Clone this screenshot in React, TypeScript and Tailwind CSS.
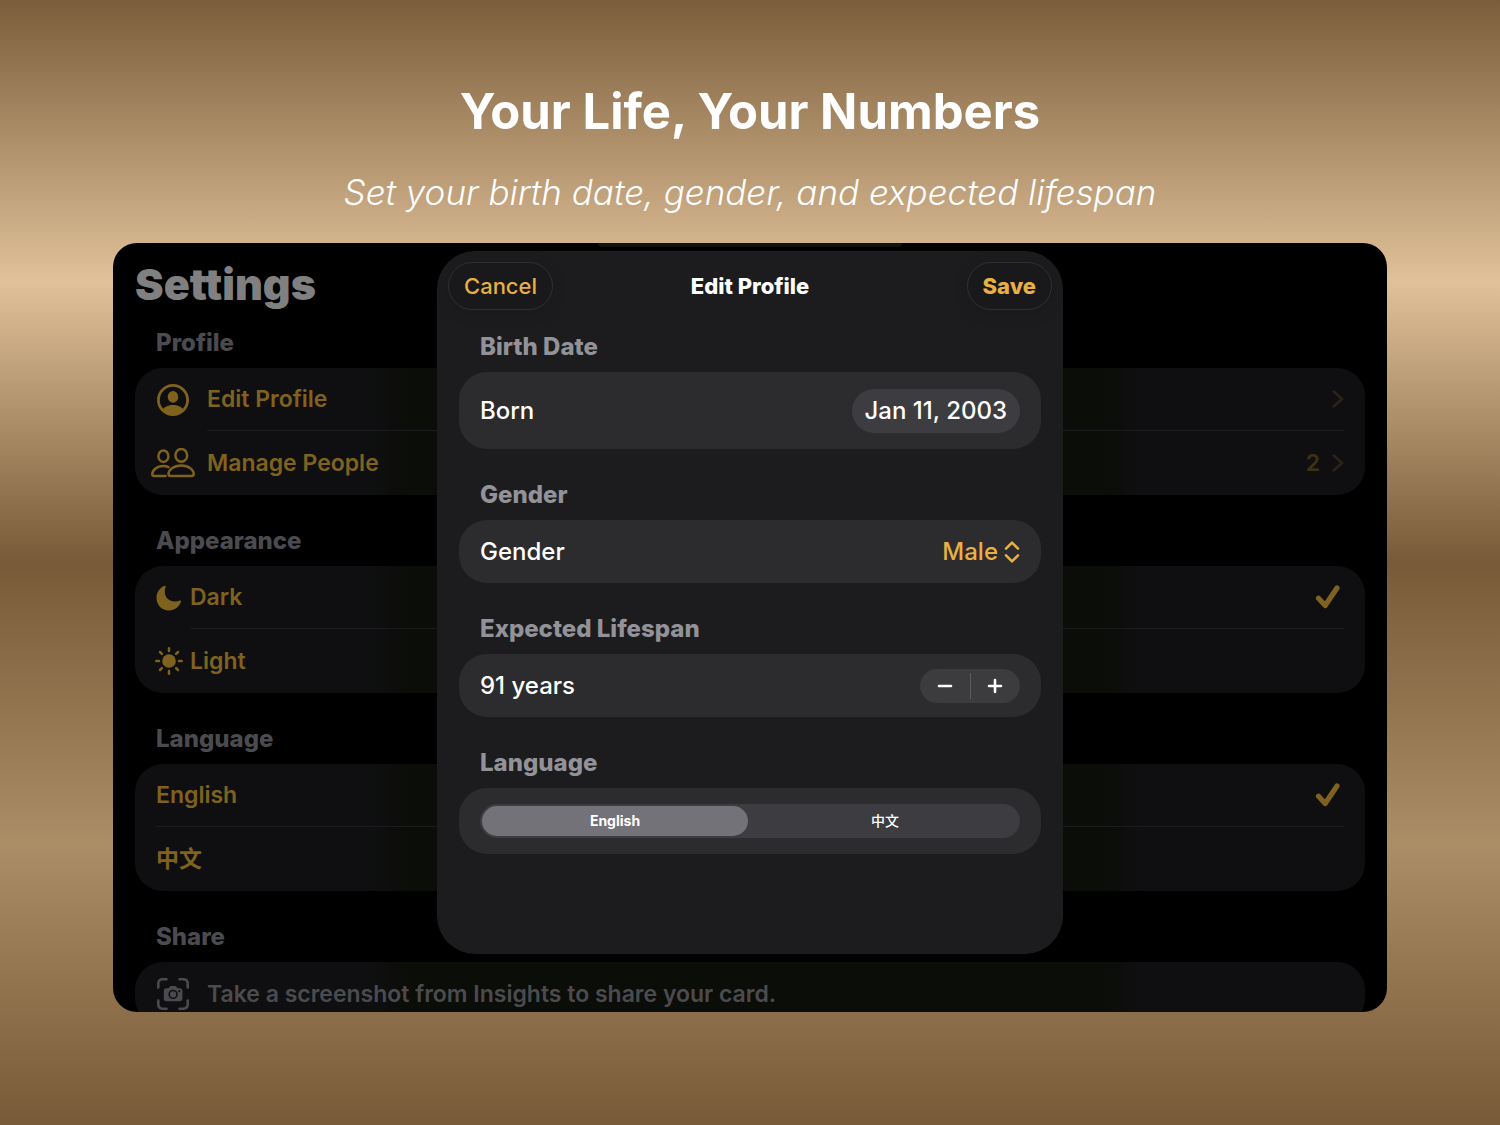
import { useState } from "react";
import type { ReactNode } from "react";
import clsx from "clsx";

interface SectionProps {
  title: string;
  dimmed?: boolean;
  children: ReactNode;
}

interface ListRowProps {
  icon?: ReactNode;
  label: string;
  trailing?: ReactNode;
  compact?: boolean;
  muted?: boolean;
  last?: boolean;
  onClick?: () => void;
}

const PersonCircleIcon = () => (
  <svg viewBox="0 0 32 32" className="size-8 shrink-0" aria-hidden="true">
    <circle cx="16" cy="16" r="14.6" fill="none" stroke="currentColor" strokeWidth="2.8" />
    <ellipse cx="16" cy="12.8" rx="5.300" ry="5.900" fill="currentColor" />
    <path
      d="M5.200 26.200C7.400 22.400 11.600 21 16 21s8.600 1.400 10.800 5.200C23.800 29.400 20 30.800 16 30.800S8.200 29.400 5.200 26.200z"
      fill="currentColor"
    />
  </svg>
);

const PeopleIcon = () => (
  <svg
    viewBox="0 0 44 30"
    className="h-[30px] w-11 shrink-0"
    fill="none"
    stroke="currentColor"
    strokeWidth="2.5"
    strokeLinecap="round"
    strokeLinejoin="round"
    aria-hidden="true"
  >
    <ellipse cx="12.400" cy="8.200" rx="5" ry="5.700" />
    <ellipse cx="30.300" cy="7.400" rx="5.900" ry="6.400" />
    <path d="M14.500 28H3.200c-1.200 0-1.900-.7-1.900-1.800 0-3.600 4.200-8.100 11.100-8.100 2 0 3.700.4 5.200 1" />
    <path d="M19.800 28c-1.500 0-2.300-.8-2.300-2 0-3.500 4.700-8.600 12.800-8.600s12.400 5.100 12.400 8.600c0 1.200-.8 2-2.300 2z" />
  </svg>
);

const MoonIcon = () => (
  <svg viewBox="0 0 26 26" className="size-[26px] shrink-0" fill="currentColor" aria-hidden="true">
    <path d="M8.600.8c.7-.3 1.300.3 1 1C9 3.300 8.800 4.900 8.800 6.500c0 6.100 4 9.900 10.200 9.900 1.900 0 3.600-.3 5-.9.700-.3 1.300.3 1 1C23.200 21.800 18.600 25.400 13 25.400 5.900 25.400.5 20 .5 12.900.5 7.300 3.800 2.700 8.600.8z" />
  </svg>
);

const SunIcon = () => (
  <svg viewBox="0 0 28 28" className="size-7 shrink-0" aria-hidden="true">
    <circle cx="14" cy="14" r="6.800" fill="currentColor" />
    <path
      d="M14 1.300v2.700M14 24v2.700M1.300 14H4M24 14h2.700M5 5l1.900 1.900M21.100 21.100 23 23M5 23l1.900-1.900M21.100 6.900 23 5"
      stroke="currentColor"
      strokeWidth="2.500"
      strokeLinecap="round"
    />
  </svg>
);

const CameraFrameIcon = () => (
  <svg viewBox="0 0 32 32" className="size-8 shrink-0" aria-hidden="true">
    <path
      d="M1.300 9.500V5.700c0-3 1.400-4.400 4.400-4.400h3.800M22.500 1.300h3.800c3 0 4.400 1.400 4.400 4.400v3.800M30.700 22.500v3.800c0 3-1.400 4.400-4.400 4.400h-3.800M9.500 30.700H5.700c-3 0-4.400-1.400-4.400-4.400v-3.800"
      fill="none"
      stroke="currentColor"
      strokeWidth="2.600"
      strokeLinecap="round"
    />
    <path
      fillRule="evenodd"
      fill="currentColor"
      d="M9.300 10.200h2.200l1.200-1.500c.4-.5.800-.7 1.400-.7h4c.6 0 1 .2 1.400.7l1.200 1.500h2.200c1.600 0 2.500.9 2.500 2.400v8.200c0 1.500-.9 2.400-2.500 2.400H9.300c-1.600 0-2.500-.9-2.500-2.400v-8.200c0-1.500.9-2.400 2.500-2.400zM16.100 11.700a4.700 4.700 0 1 0 0 9.400 4.700 4.700 0 0 0 0-9.400zm0 1.600a3.100 3.100 0 1 1 0 6.200 3.100 3.100 0 0 1 0-6.200zM22.300 12a1.100 1.100 0 1 0 0 2.200 1.100 1.100 0 0 0 0-2.200z"
    />
  </svg>
);

const CheckIcon = () => (
  <svg
    viewBox="0 0 26 26"
    className="mr-[3px] size-[26px] shrink-0"
    fill="none"
    stroke="currentColor"
    strokeWidth="5.200"
    strokeLinecap="round"
    strokeLinejoin="round"
    aria-hidden="true"
  >
    <path d="M3.500 14.200 10.200 21.500 22 4" />
  </svg>
);

const ChevronIcon = () => (
  <svg
    viewBox="0 0 12 18"
    className="h-[18px] w-3 shrink-0 text-[#2d2419]"
    fill="none"
    stroke="currentColor"
    strokeWidth="2.400"
    strokeLinecap="round"
    strokeLinejoin="round"
    aria-hidden="true"
  >
    <path d="M1.600 1.400 10 9l-8.400 7.600" />
  </svg>
);

const UpDownIcon = () => (
  <svg
    viewBox="0 0 16 22"
    className="h-[22px] w-4 shrink-0"
    fill="none"
    stroke="currentColor"
    strokeWidth="2.600"
    strokeLinecap="round"
    strokeLinejoin="round"
    aria-hidden="true"
  >
    <path d="M2 7.600l6-6 6 6M2 14.400l6 6 6-6" />
  </svg>
);

const Section: React.FC<SectionProps> = ({ title, dimmed, children }) => (
  <section className="mb-[31px]">
    <h2
      className={clsx(
        "mb-[10px] pl-[21px] text-2xl leading-[30px] font-extrabold",
        dimmed ? "text-[#4b4b4f]" : "text-[#929298]"
      )}
    >
      {title}
    </h2>
    <div
      className={clsx(
        "overflow-hidden rounded-[28px]",
        dimmed
          ? "bg-[linear-gradient(to_right,#0f0f11_19%,#0b0d09_22%,#0b0d09_79%,#0f0f11_82%)]"
          : "bg-[#2c2c2e]"
      )}
    >
      {children}
    </div>
  </section>
);

const ListRow: React.FC<ListRowProps> = ({
  icon,
  label,
  trailing,
  compact,
  muted,
  last,
  onClick,
}) => (
  <button
    type="button"
    onClick={onClick}
    className={clsx(
      "flex w-full items-center pl-[21px] text-left text-[23px] font-semibold",
      last ? "h-16" : "h-[63px]",
      muted ? "text-[#4b4b4f]" : "text-[#80621f]"
    )}
  >
    {icon && (
      <span
        className={clsx(
          "flex shrink-0 justify-center",
          compact ? "mr-2 w-[26px]" : "mr-[17px] w-[34px]"
        )}
      >
        {icon}
      </span>
    )}
    <span
      className={clsx(
        "mr-[21px] flex flex-1 items-center justify-between self-stretch",
        !last && "border-b border-[#1c1c1e]"
      )}
    >
      {label}
      {trailing}
    </span>
  </button>
);

const EditProfileSheet = () => {
  const [years, setYears] = useState(91);
  const [gender, setGender] = useState("Male");
  const [language, setLanguage] = useState("English");

  return (
    <div
      role="dialog"
      aria-labelledby="sheet-title"
      className="absolute inset-x-0 top-2 mx-auto w-[626px] max-w-full rounded-[38px] bg-[#1c1c1e] pb-[69px]"
    >
      <header className="flex items-center justify-between px-[11px] pt-[11px] text-[22px]">
        <div className="flex flex-1">
          <button
            type="button"
            className="h-12 rounded-full border border-[#303032] bg-[#19191b] px-[15px] font-medium text-[#e8b044] shadow-[0_4px_16px_rgba(0,0,0,0.12)]"
          >
            Cancel
          </button>
        </div>
        <h1 id="sheet-title" className="font-extrabold text-white">
          Edit Profile
        </h1>
        <div className="flex flex-1 justify-end">
          <button
            type="button"
            className="h-12 rounded-full border border-[#303032] bg-[#19191b] px-[15px] font-extrabold text-[#e8b044] shadow-[0_4px_16px_rgba(0,0,0,0.12)]"
          >
            Save
          </button>
        </div>
      </header>

      <div className="px-[22px] pt-[22px] text-2xl font-medium text-white">
        <Section title="Birth Date">
          <div className="flex h-[77px] items-center justify-between px-[21px]">
            <span id="born">Born</span>
            <button
              type="button"
              aria-describedby="born"
              className="h-11 rounded-full bg-[#3d3c41] px-[13px]"
            >
              Jan 11, 2003
            </button>
          </div>
        </Section>

        <Section title="Gender">
          <div className="flex h-[63px] items-center justify-between px-[21px]">
            <label htmlFor="gender">Gender</label>
            <div className="flex items-center gap-1.5 text-[#e8b044]">
              <select
                id="gender"
                value={gender}
                onChange={(e) => setGender(e.target.value)}
                className="field-sizing-content appearance-none bg-transparent outline-none"
              >
                <option>Male</option>
                <option>Female</option>
              </select>
              <UpDownIcon />
            </div>
          </div>
        </Section>

        <Section title="Expected Lifespan">
          <div className="flex h-[63px] items-center justify-between px-[21px]">
            <span>{years} years</span>
            <div className="flex h-[34px] w-[100px] items-center rounded-full bg-[#3c3c3e]">
              <button
                type="button"
                aria-label="Decrease"
                onClick={() => setYears(years - 1)}
                className="flex h-full flex-1 items-center justify-center"
              >
                <svg viewBox="0 0 16 16" className="size-4" stroke="currentColor" strokeWidth="2.600" strokeLinecap="round">
                  <path d="M2 8h12" />
                </svg>
              </button>
              <span className="h-[26px] w-px bg-[#5c5c5f]" />
              <button
                type="button"
                aria-label="Increase"
                onClick={() => setYears(years + 1)}
                className="flex h-full flex-1 items-center justify-center"
              >
                <svg viewBox="0 0 16 16" className="size-4" stroke="currentColor" strokeWidth="2.600" strokeLinecap="round">
                  <path d="M2 8h12M8 2v12" />
                </svg>
              </button>
            </div>
          </div>
        </Section>

        <Section title="Language">
          <div className="px-[21px] py-4">
            <div className="flex h-[34px] gap-1 rounded-full bg-[#3d3c41] p-0.5 text-sm">
              {["English", "中文"].map((item) => (
                <label
                  key={item}
                  className={clsx(
                    "flex flex-1 items-center justify-center rounded-full",
                    language === item && "bg-[#737278] font-bold"
                  )}
                >
                  <input
                    type="radio"
                    name="language"
                    className="sr-only"
                    checked={language === item}
                    onChange={() => setLanguage(item)}
                  />
                  {item}
                </label>
              ))}
            </div>
          </div>
        </Section>
      </div>
    </div>
  );
};

const App = () => {
  const [theme, setTheme] = useState("Dark");
  const [language, setLanguage] = useState("English");

  return (
    <main className="flex h-screen flex-col bg-[linear-gradient(to_bottom,#7b5d3b,#e0c199_25%,#785a38_50%,#ab8d66_75%,#785a38)] px-[113px] pb-[113px] font-['Inter','Noto_Sans_CJK_SC',sans-serif]">
      <header className="flex h-[243px] shrink-0 flex-col items-center pt-20 text-white">
        <h1 className="text-[49px] leading-[64px] font-bold">Your Life, Your Numbers</h1>
        <p className="mt-6 text-[35px] leading-[48px] font-light italic">
          Set your birth date, gender, and expected lifespan
        </p>
      </header>

      <div className="relative min-h-0 flex-1 overflow-hidden rounded-3xl bg-black">
        <div className="px-[22px] pt-4">
          <h1 className="mb-[19px] text-[43px] leading-[50px] font-black text-[#808080]">
            Settings
          </h1>

          <Section title="Profile" dimmed>
            <ListRow icon={<PersonCircleIcon />} label="Edit Profile" trailing={<ChevronIcon />} />
            <ListRow
              icon={<PeopleIcon />}
              label="Manage People"
              trailing={
                <span className="flex items-center gap-3 text-[#3f3115]">
                  2<ChevronIcon />
                </span>
              }
              last
            />
          </Section>

          <Section title="Appearance" dimmed>
            <ListRow
              icon={<MoonIcon />}
              label="Dark"
              compact
              trailing={theme === "Dark" && <CheckIcon />}
              onClick={() => setTheme("Dark")}
            />
            <ListRow
              icon={<SunIcon />}
              label="Light"
              compact
              trailing={theme === "Light" && <CheckIcon />}
              onClick={() => setTheme("Light")}
              last
            />
          </Section>

          <Section title="Language" dimmed>
            <ListRow
              label="English"
              trailing={language === "English" && <CheckIcon />}
              onClick={() => setLanguage("English")}
            />
            <ListRow
              label="中文"
              trailing={language === "中文" && <CheckIcon />}
              onClick={() => setLanguage("中文")}
              last
            />
          </Section>

          <Section title="Share" dimmed>
            <ListRow
              icon={<CameraFrameIcon />}
              label="Take a screenshot from Insights to share your card."
              muted
              last
            />
          </Section>
        </div>

        {/* edge of the floating tab bar behind the sheet */}
        <div className="absolute inset-x-0 top-0 mx-auto h-1 w-[304px] rounded-b-full bg-[#12120f]" />
        <EditProfileSheet />
      </div>
    </main>
  );
};

export default App;
